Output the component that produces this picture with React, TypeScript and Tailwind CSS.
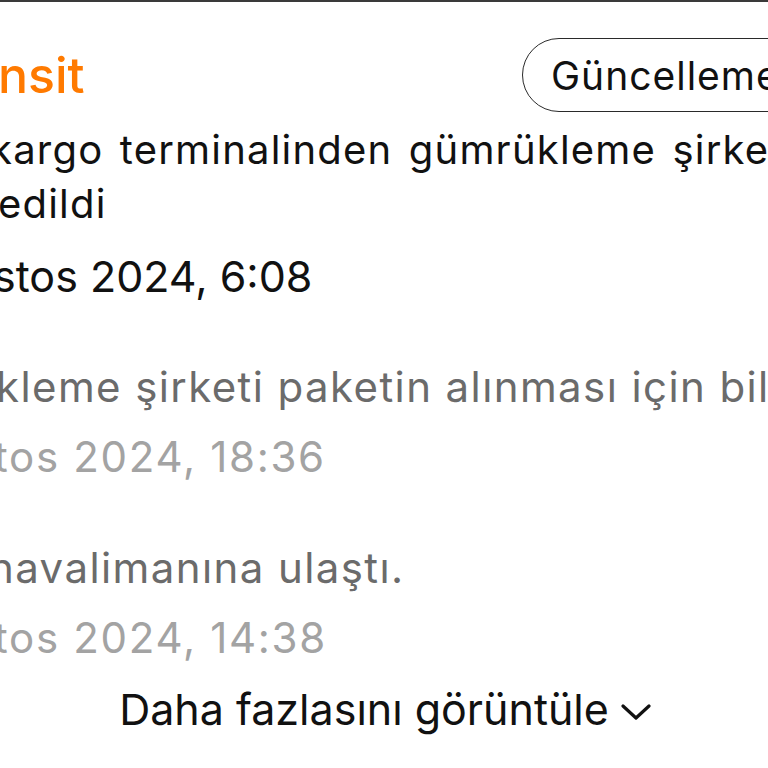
type StepProps = {
    text: string,
    date: string,
    textShift: string,
    dateShift: string,
}

function Step({text, date, textShift, dateShift}: StepProps) {
    return (
        <div className="flex flex-col">
            <div className={`h-[54px] leading-[54px] text-[42px] tracking-[1.4px] text-[#6b6b6b] whitespace-nowrap ${textShift}`}>{text}</div>
            <div className={`mt-[16px] h-[54px] leading-[54px] text-[42px] tracking-[1.7px] text-[#a3a3a3] whitespace-nowrap ${dateShift}`}>{date}</div>
        </div>
    )
}

export default function App() {
    return (
        <div className="w-[768px] h-[768px] overflow-hidden bg-white border-t-2 border-[#3a3a3a] font-['Inter',sans-serif] text-[#111]">
            <div className="mt-[36px] h-[74px] flex items-center justify-between">
                <span className="-ml-[2px] text-[50px] font-medium text-[#ff7a00] leading-none">nsit</span>
                <div className="-mr-[90px] h-[74px] w-[336px] shrink-0 rounded-full border-[1.5px] border-[#2a2a2a] flex items-center pl-[28px]">
                    <span className="text-[39px] tracking-[1px] leading-none whitespace-nowrap">Güncellemeler</span>
                </div>
            </div>

            <div className="mt-[11px] flex flex-col">
                <div className="-ml-[10px] h-[54px] leading-[54px] text-[40px] tracking-[1.2px] [word-spacing:4px] whitespace-nowrap">kargo terminalinden gümrükleme şirketine teslim</div>
                <div className="-ml-[2px] h-[54px] leading-[54px] text-[40px] tracking-[1.2px] whitespace-nowrap">edildi</div>
                <div className="-ml-[7px] mt-[18px] h-[54px] leading-[54px] text-[43px] whitespace-nowrap">stos 2024, 6:08</div>
            </div>

            <div className="mt-[57px]">
                <Step text="kleme şirketi paketin alınması için bilgi bekliyor" date="tos 2024, 18:36" textShift="-ml-[4px]" dateShift="-ml-[6px]" />
            </div>
            <div className="mt-[57px]">
                <Step text="havalimanına ulaştı." date="tos 2024, 14:38" textShift="-ml-[11px]" dateShift="-ml-[6px]" />
            </div>

            <div className="mt-[17px] h-[54px] flex items-center justify-center gap-[12px] ml-[2px]">
                <span className="text-[43px] leading-none">Daha fazlasını görüntüle</span>
                <svg width="30" height="16" viewBox="0 0 30 16" className="mt-[6px]" fill="none" stroke="#111" strokeWidth="3.2" strokeLinecap="round" strokeLinejoin="round">
                    <polyline points="2,2 15,14 28,2" />
                </svg>
            </div>
        </div>
    )
}
